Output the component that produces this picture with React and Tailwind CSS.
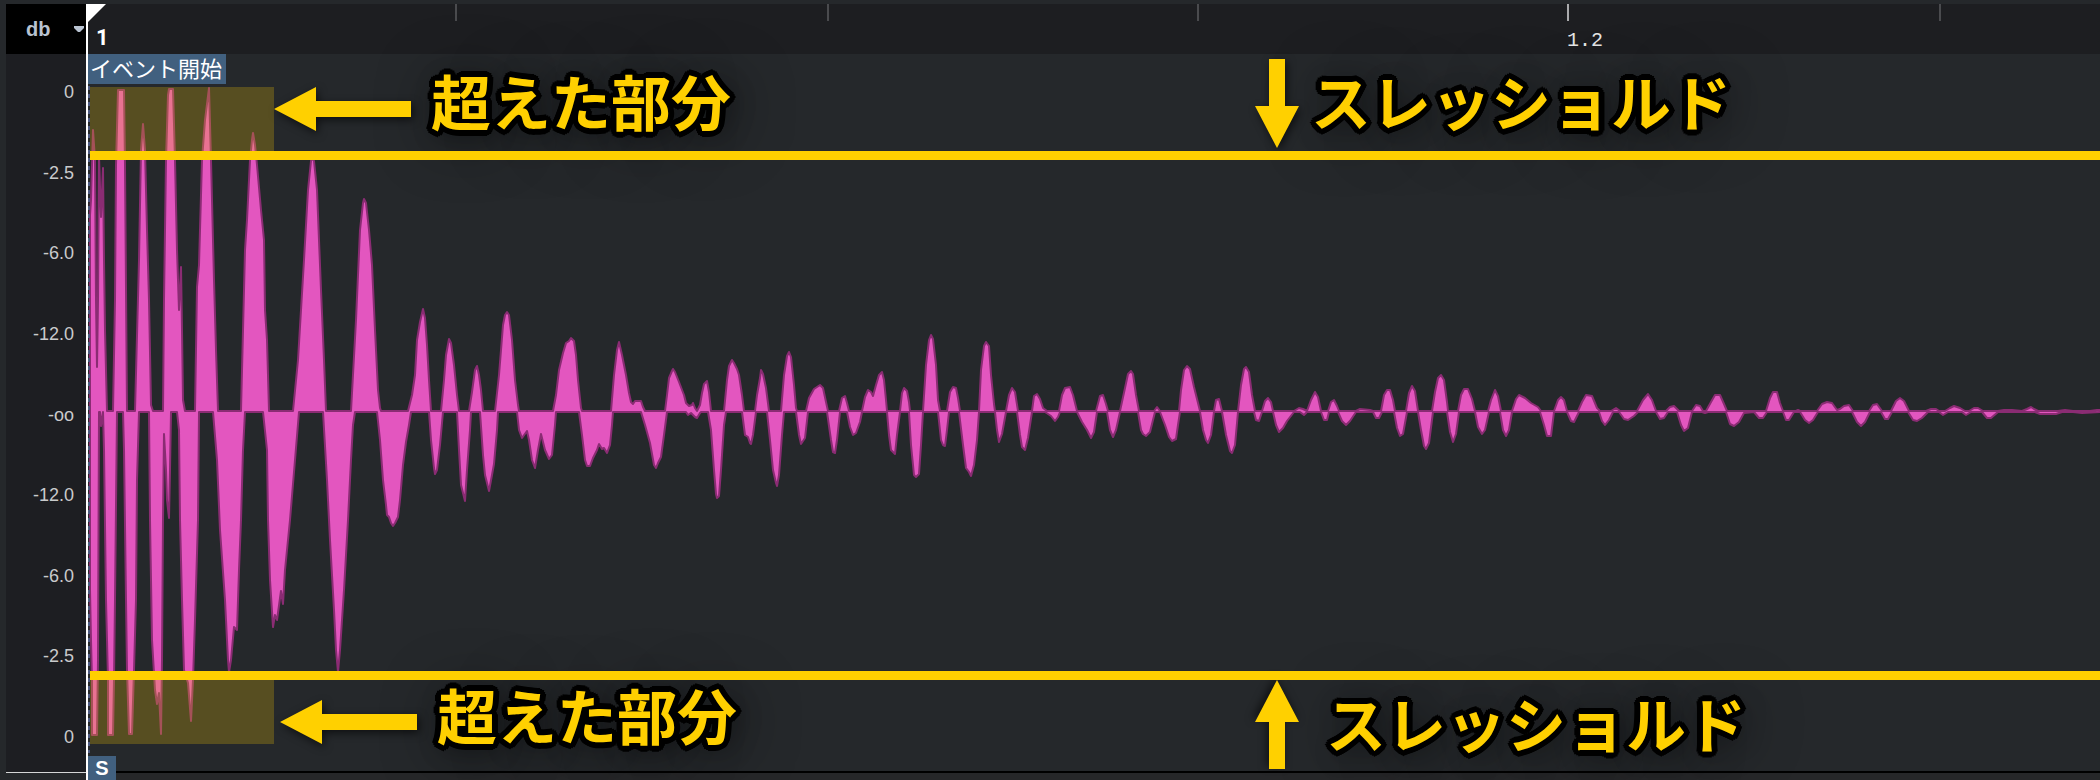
import React from "react";

// Upper and lower outline of the waveform, "x,y" pairs from left to right
const UPPER = `90,215 91,200 93,130 95,160 96,300 97,367 98,300 99,156 101,217 103,168 104,260 105,330 107,411
113,411 115,300 116,165 118,90 124,90 125,165 127,411 135,411 139,260 141,150 143,124 145,150 147,230 149,300 151,405 153,411
163,411 164,300 166,160 168,95 169,89 173,89 175,160 177,250 179,310 181,267 182,330 183,400 185,411
195,411 197,287 199,265 202,160 205,120 209,88 211,160 214,280 216,350 218,411
241,411 245,250 247,220 250,160 252,140 253,133 255,145 257,165 261,210 264,240 265,310 267,340 269,411
293,411 298,360 304,260 308,190 311,161 312,158 314,161 317,190 321,290 324,360 326,411
351,411 356,320 360,230 363,203 364,199 366,203 369,230 372,265 375,330 378,390 380,408 381,411
408,411 412,395 415,375 417,340 420,322 423,309 425,318 427,345 429,380 431,411
441,411 444,380 446,355 449,339 451,343 454,365 457,395 459,411 469,411 472,392 475,370 477,366 479,375 481,390 483,411
495,411 499,375 503,325 505,315 507,312 509,315 512,340 515,380 518,405 519,411
553,411 556,395 559,370 563,353 566,343 569,341 571,338 574,341 576,355 578,380 581,408 582,411
611,411 614,375 617,350 619,342 622,355 626,375 629,393 631,402 633,404 635,401 641,401 643,407 645,411
665,411 667,395 669,378 672,371 673,369 675,372 679,382 684,395 686,403 689,406 692,405 693,403 695,408 697,411 700,405 702,393 704,384 707,381 709,392 711,411
724,411 727,380 729,366 732,360 734,363 737,369 739,375 742,395 744,411 755,411 757,395 760,378 761,370 763,374 766,388 769,411
781,411 784,375 787,356 789,352 791,357 794,385 796,408 797,411 806,411 809,398 814,389 820,385 823,388 826,402 828,411
839,411 842,398 845,396 847,403 849,411 862,411 865,397 868,390 871,392 873,396 876,385 879,375 882,372 884,380 886,400 887,411
900,411 902,393 904,388 907,391 909,402 910,411 923,411 926,365 929,340 931,335 933,339 936,365 938,400 940,411
947,411 950,392 953,387 956,388 958,398 960,411 979,411 981,370 984,346 986,342 989,346 991,375 994,404 995,411
1006,411 1009,395 1012,388 1015,392 1018,411 1032,411 1034,396 1037,394 1040,399 1043,408 1047,411
1059,411 1062,395 1065,388 1070,387 1073,395 1077,411 1096,411 1100,396 1103,395 1106,404 1108,411
1120,411 1125,388 1128,374 1131,371 1133,374 1136,395 1139,411 1154,411 1157,407 1160,411
1179,411 1181,390 1184,370 1187,366 1190,369 1194,387 1199,407 1200,411 1214,411 1216,400 1219,399 1222,411
1238,411 1241,385 1244,369 1246,367 1249,372 1252,395 1255,411 1262,411 1265,401 1268,398 1271,402 1273,411
1294,411 1299,408 1303,409 1307,411 1311,400 1315,392 1318,397 1321,411 1328,411 1331,402 1334,400 1337,406 1339,411
1356,411 1360,409 1370,410 1373,411 1381,411 1384,395 1387,390 1390,390 1393,400 1395,411
1406,411 1409,393 1412,386 1415,391 1418,411 1432,411 1435,392 1438,378 1441,375 1444,380 1447,402 1448,411
1458,411 1461,395 1464,389 1468,389 1472,399 1475,411 1488,411 1491,400 1495,390 1498,396 1501,411
1512,411 1516,399 1519,395 1525,398 1531,403 1538,407 1541,411 1554,411 1558,400 1561,397 1564,400 1567,411
1578,411 1582,402 1586,395 1592,396 1597,408 1600,411 1611,411 1616,408 1620,411 1637,411 1643,400 1648,394 1652,400 1656,411
1666,411 1670,407 1674,406 1679,411 1692,411 1696,405 1700,406 1703,411 1706,411 1711,402 1715,395 1720,395 1724,404 1727,411
1766,411 1770,398 1773,392 1777,392 1780,403 1783,411 1796,411 1798,410 1800,411
1817,411 1822,404 1827,402 1832,403 1837,410 1840,409 1844,406 1849,405 1853,411 1869,411 1873,405 1877,404 1882,411
1891,411 1896,401 1900,398 1904,401 1909,411 1926,411 1931,409 1936,409 1939,411 1945,411 1950,408 1954,406 1960,408 1965,411
1969,411 1974,408 1978,408 1983,411 1998,411 2004,410 2012,410 2022,411 2027,409 2031,407 2034,409 2038,411
2058,411 2065,410 2073,411 2090,411 2097,410 2102,410`;

const LOWER = `90,590 91,640 92,680 92,735 97,735 98,660 99,412 100,412 101,426 103,412 104,450 106,600 108,680 108,735 113,735 114,680 115,600 117,412
123,412 124,450 126,600 127,670 129,734 132,734 134,670 136,600 137,480 139,412
149,412 150,520 152,640 155,690 157,704 159,693 161,734 162,660 163,520 164,434 166,470 167,500 169,518 170,470 171,412
177,412 179,430 180,520 182,600 184,670 188,683 191,721 193,680 195,620 198,520 199,412
213,412 217,460 220,530 225,600 228,660 229,672 231,660 234,627 237,630 239,570 241,520 243,450 245,412
263,412 267,450 268,520 270,580 273,627 275,615 277,620 281,591 283,604 285,570 290,520 295,460 299,412
323,412 327,480 330,540 334,610 336,650 338,672 340,650 344,590 348,520 351,460 353,425 355,412
377,412 380,440 383,480 386,505 387,515 389,517 391,523 393,526 395,523 398,517 400,500 403,465 406,442 409,425 411,412
429,412 431,440 434,468 435,474 437,470 440,445 443,412 457,412 459,450 461,485 465,501 467,470 470,430 471,412
480,412 483,455 485,475 488,487 489,491 492,475 494,464 497,430 498,412
517,412 519,430 522,438 527,431 529,440 532,460 535,468 538,450 541,434 545,450 549,459 552,455 555,425 556,412
579,412 582,435 585,460 587,466 590,466 593,458 597,450 599,444 602,449 604,448 607,453 610,445 612,425 613,412
641,412 645,425 650,443 654,465 656,468 658,463 661,457 664,435 667,412 686,412 688,415 691,413 695,417 697,418 700,413 701,412
708,412 711,430 714,470 716,494 717,498 719,496 721,470 724,425 726,412 742,412 745,435 748,437 750,443 751,444 753,435 756,412
767,412 770,440 773,470 776,483 777,486 779,475 782,435 784,412 796,412 799,435 801,444 805,438 808,412
827,412 831,440 833,452 835,453 837,440 840,412 847,412 850,427 853,435 856,433 860,422 862,412
887,412 889,435 891,450 893,452 895,454 897,435 900,412 909,412 911,445 914,475 916,477 919,474 921,445 923,412
938,412 941,440 943,445 945,446 947,430 949,412 959,412 963,445 966,468 969,472 971,476 974,465 977,440 979,412
995,412 997,430 999,442 1002,434 1006,412 1017,412 1020,435 1022,447 1025,450 1028,438 1032,412
1045,412 1051,416 1055,421 1058,417 1060,412 1077,412 1082,422 1087,430 1091,438 1094,432 1097,412
1107,412 1110,430 1113,437 1116,430 1120,412 1138,412 1141,430 1143,434 1146,436 1150,432 1155,412
1160,412 1165,425 1169,437 1172,441 1176,439 1178,425 1180,412 1200,412 1203,430 1206,440 1208,443 1211,435 1214,412
1222,412 1226,435 1230,451 1232,453 1235,445 1238,412 1254,412 1256,420 1259,421 1262,412
1273,412 1276,425 1279,432 1283,428 1287,421 1294,412 1300,412 1304,415 1307,412 1321,412 1324,420 1327,420 1329,412
1338,412 1342,421 1346,425 1350,421 1356,412 1373,412 1376,418 1379,418 1382,412
1394,412 1397,428 1400,436 1403,434 1407,412 1418,412 1421,430 1424,446 1426,449 1429,443 1433,412
1447,412 1450,432 1453,442 1456,434 1459,412 1475,412 1478,427 1482,434 1485,430 1489,412
1500,412 1503,430 1506,436 1509,430 1512,412 1540,412 1544,425 1547,436 1551,436 1554,412 1567,412 1571,421 1574,422 1579,412
1599,412 1602,421 1605,425 1609,420 1613,412 1619,412 1624,419 1628,420 1634,416 1638,412 1656,412 1660,419 1664,418 1668,412
1677,412 1681,425 1684,431 1688,428 1692,412 1702,412 1705,413 1708,412 1726,412 1730,424 1734,426 1739,422 1744,413
1754,412 1759,418 1763,418 1767,412 1783,412 1786,420 1789,420 1794,412 1800,412 1805,420 1809,423 1813,420 1818,412
1852,412 1857,422 1861,426 1865,422 1870,412 1881,412 1885,419 1888,419 1892,412 1908,412 1913,420 1917,421 1922,418 1928,412
1939,412 1943,415 1948,412 1962,412 1966,415 1971,412 1982,412 1987,418 1991,418 1998,412
2035,412 2040,414 2056,414 2062,412 2073,412 2082,413 2102,412`;

const outline = [
  ...UPPER.split(/\s+/),
  ...LOWER.split(/\s+/).reverse(),
].join(" ");

const LEVELS = ["0", "-2.5", "-6.0", "-12.0", "-oo", "-12.0", "-6.0", "-2.5", "0"];

function Waveform() {
  return (
    <svg
      viewBox="88 54 2012 717"
      preserveAspectRatio="none"
      className="absolute inset-0 w-full h-full"
      aria-hidden="true"
    >
      <polygon
        points={outline}
        fill="#e356bf"
        stroke="#8a2c73"
        strokeWidth="2"
        strokeLinejoin="round"
      />
      <path d="M89 86V753" stroke="#4d5a80" strokeWidth="2" strokeDasharray="4 4" />
    </svg>
  );
}

function ArrowLeft({ className }) {
  return (
    <svg
      viewBox="0 0 137 44"
      className={`w-[137px] h-11 shrink-0 drop-shadow-[2px_3px_4px_rgba(0,0,0,0.6)] ${className}`}
      aria-hidden="true"
    >
      <path d="M0 22 42 0V14H137V30H42V44Z" fill="#ffd000" />
    </svg>
  );
}

function ArrowDown({ className }) {
  return (
    <svg
      viewBox="0 0 44 89"
      className={`w-11 h-[89px] shrink-0 drop-shadow-[2px_3px_4px_rgba(0,0,0,0.6)] ${className}`}
      aria-hidden="true"
    >
      <path d="M22 89 0 47H14V0H30V47H44Z" fill="#ffd000" />
    </svg>
  );
}

// Yellow text with a round black outline (a ring of hard shadows) and a wide soft glow
function Caption({ className, children }) {
  return (
    <p
      className={`whitespace-nowrap font-['Noto_Sans_CJK_JP',sans-serif] font-bold text-[60px] leading-[60px] text-[#ffd000] [text-shadow:6px_0_#000,-6px_0_#000,0_6px_#000,0_-6px_#000,4px_4px_#000,-4px_4px_#000,4px_-4px_#000,-4px_-4px_#000,5px_2px_#000,-5px_2px_#000,5px_-2px_#000,-5px_-2px_#000,2px_5px_#000,-2px_5px_#000,2px_-5px_#000,-2px_-5px_#000,5px_5px_24px_rgba(0,0,0,0.4),5px_5px_60px_rgba(0,0,0,0.8)] ${className}`}
    >
      {children}
    </p>
  );
}

function Threshold() {
  return <div className="relative z-10 h-[9px] ml-[2px] bg-[#ffd000]" />;
}

export default function App() {
  return (
    <div className="flex min-h-screen overflow-hidden bg-[#25282b] pt-1 pl-1.5 font-['Liberation_Sans',sans-serif]">
      <aside className="flex flex-col w-20 shrink-0">
        <div className="flex items-center h-[50px] bg-black pl-5 text-[#b9c3d1]">
          <select
            aria-label="Scale"
            className="appearance-none w-12 bg-transparent font-bold text-xl leading-6 outline-none"
          >
            <option>db</option>
          </select>
          <svg viewBox="0 0 10 6" className="w-2.5 h-1.5" aria-hidden="true">
            <path d="M0 0H10V2L6 6H4L0 2Z" fill="currentColor" />
          </svg>
        </div>
        <ul className="flex flex-col flex-1 justify-between bg-[#1d1e22] border-b border-[#d5d6d7] pt-7 pb-[25px] pr-3 text-right text-lg leading-5 text-[#c9cacc]">
          {LEVELS.map((level, i) => (
            <li key={i}>{level}</li>
          ))}
        </ul>
        <div className="h-[7px]" />
      </aside>

      <main className="relative flex flex-col flex-1 min-w-0 border-l-2 border-white">
        <header className="relative grid grid-cols-[367fr_372fr_370fr_370fr_372fr_161fr] h-[50px] bg-[#1d1e21]">
          <div className="flex items-end pl-2 pb-1">
            <span className="font-['Roboto',sans-serif] font-bold text-[22px] leading-6 text-white">
              1
            </span>
          </div>
          <div className="h-[17px] border-l-2 border-[#4a4b4e]" />
          <div className="h-[17px] border-l-2 border-[#4a4b4e]" />
          <div className="h-[17px] border-l-2 border-[#4a4b4e]" />
          <div>
            <div className="h-[17px] border-l-2 border-[#a9aaac]" />
            <span className="block pt-2 font-['Liberation_Mono',monospace] text-xl leading-6 text-[#e4e5e6]">
              1.2
            </span>
          </div>
          <div className="h-[17px] border-l-2 border-[#4a4b4e]" />
          <svg
            viewBox="0 0 18 18"
            className="absolute top-0 left-0 w-[18px] h-[18px]"
            aria-hidden="true"
          >
            <path d="M0 0H18L0 18Z" fill="#fff" />
          </svg>
        </header>

        <section className="relative flex flex-col flex-1">
          <Waveform />

          <div className="relative flex h-[97px]">
            <div className="flex w-[58%] shrink-0">
              <div className="flex flex-col justify-between w-[186px] shrink-0">
                <span className="w-[138px] h-[30px] pl-[2px] bg-[#41607f] font-['Noto_Sans_CJK_JP',sans-serif] text-[22px] leading-[26px] text-white whitespace-nowrap">
                  イベント開始
                </span>
                <div className="h-16 ml-[2px] bg-[#ffd000]/23" />
              </div>
              <ArrowLeft className="mt-[33px]" />
              <Caption className="ml-5 mt-4">超えた部分</Caption>
            </div>
            <ArrowDown className="mt-[5px]" />
            <Caption className="ml-3 mt-4">スレッショルド</Caption>
          </div>

          <Threshold />
          <div className="flex-1 min-h-[511px]" />
          <Threshold />

          <div className="relative flex h-[91px]">
            <div className="flex w-[58%] shrink-0">
              <div className="w-[186px] shrink-0">
                <div className="h-16 ml-[2px] bg-[#ffd000]/23" />
              </div>
              <ArrowLeft className="ml-1.5 mt-5" />
              <Caption className="ml-5 mt-1">超えた部分</Caption>
            </div>
            <ArrowDown className="rotate-180" />
            <Caption className="ml-[27px] mt-3">スレッショルド</Caption>
          </div>
        </section>

        <footer className="h-[9px] border-t-2 border-black bg-[#262729]" />
        <span className="absolute bottom-0 left-0 w-7 h-6 bg-[#41607f] text-center font-bold text-xl leading-6 text-white">
          S
        </span>
      </main>
    </div>
  );
}
